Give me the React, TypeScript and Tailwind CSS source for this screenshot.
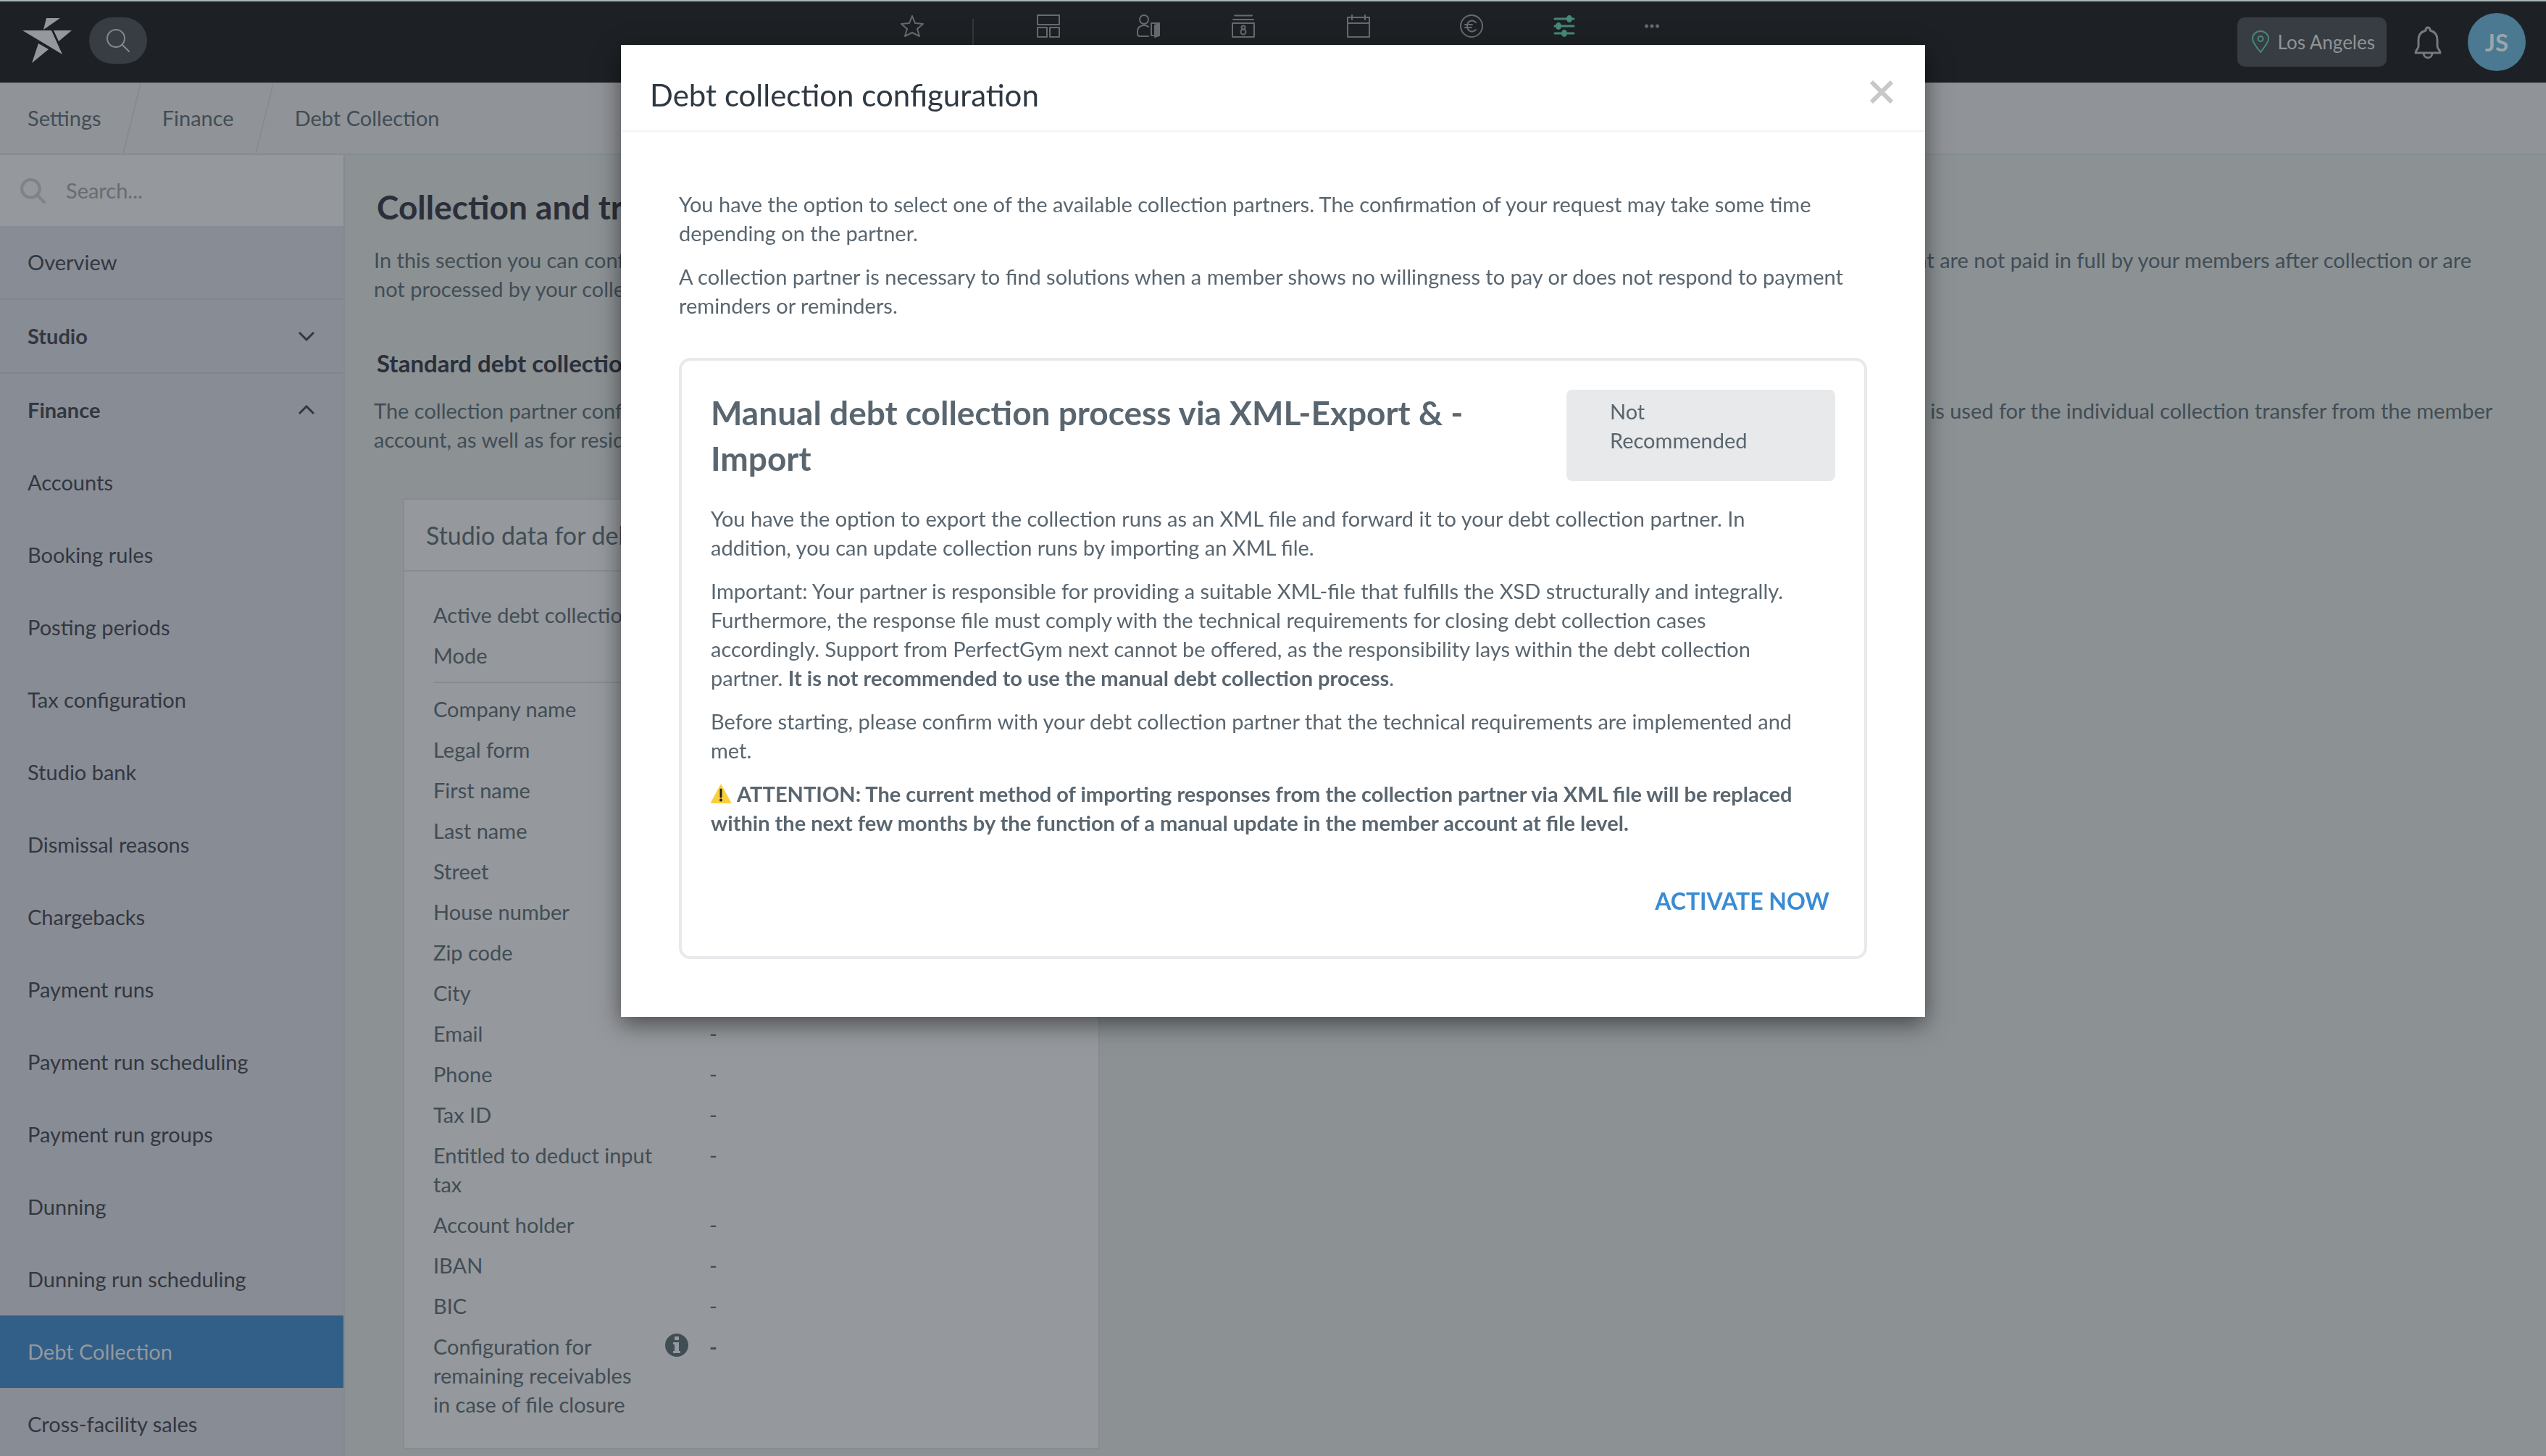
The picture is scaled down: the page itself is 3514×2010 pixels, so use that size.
import { useState, type ReactNode } from 'react';

type Section = {
  title: string;
  open: boolean;
  items: string[];
};

type Field = {
  label: string;
  value: string;
  info?: boolean;
};

const sections: Section[] = [
  { title: 'Studio', open: false, items: [] },
  {
    title: 'Finance',
    open: true,
    items: [
      'Accounts',
      'Booking rules',
      'Posting periods',
      'Tax configuration',
      'Studio bank',
      'Dismissal reasons',
      'Chargebacks',
      'Payment runs',
      'Payment run scheduling',
      'Payment run groups',
      'Dunning',
      'Dunning run scheduling',
      'Debt Collection',
      'Cross-facility sales',
    ],
  },
];

const partnerFields: Field[] = [
  { label: 'Active debt collection', value: '-' },
  { label: 'Mode', value: '-' },
];

const studioFields: Field[] = [
  { label: 'Company name', value: '-' },
  { label: 'Legal form', value: '-' },
  { label: 'First name', value: '-' },
  { label: 'Last name', value: '-' },
  { label: 'Street', value: '-' },
  { label: 'House number', value: '-' },
  { label: 'Zip code', value: '-' },
  { label: 'City', value: '-' },
  { label: 'Email', value: '-' },
  { label: 'Phone', value: '-' },
  { label: 'Tax ID', value: '-' },
  { label: 'Entitled to deduct input tax', value: '-' },
  { label: 'Account holder', value: '-' },
  { label: 'IBAN', value: '-' },
  { label: 'BIC', value: '-' },
  { label: 'Configuration for remaining receivables in case of file closure', value: '-', info: true },
];

function LogoIcon() {
  return (
    <svg width="68" height="64" viewBox="0 0 68 64" fill="#95989c" aria-hidden="true">
      <path d="M33 1h19L29 17z" />
      <path d="M0 18h40l15 33z" />
      <path d="M43 18h25L50 33z" />
      <path d="M22 36l14 8-23 19z" />
    </svg>
  );
}

function SearchIcon({ size, stroke }: { size: number; stroke: number }) {
  return (
    <svg width={size} height={size} viewBox="0 0 34 34" fill="none" stroke="currentColor" strokeWidth={stroke} strokeLinecap="round" aria-hidden="true">
      <circle cx="14" cy="14" r="12" />
      <path d="M23 23l9 9" />
    </svg>
  );
}

function NavButton({ label, className, children }: { label: string; className: string; children: ReactNode }) {
  return (
    <button type="button" aria-label={label} className={`flex justify-center text-[#686b6e] ${className}`}>
      <svg width="32" height="32" viewBox="0 0 32 32" fill="none" stroke="currentColor" strokeWidth="2" strokeLinejoin="round" strokeLinecap="round" aria-hidden="true">
        {children}
      </svg>
    </button>
  );
}

function TopBar() {
  return (
    <header className="grid h-[114px] shrink-0 grid-cols-[1fr_auto_1fr] border-t-2 border-[#a9b7b7] bg-[#1d2125]">
      <div className="flex items-start gap-6 pt-[22px] pl-[31px]">
        <a href="#home" aria-label="Home">
          <LogoIcon />
        </a>
        <button type="button" aria-label="Search" className="flex h-16 w-20 items-center justify-center rounded-full bg-[#373d42] text-[#85888b]">
          <SearchIcon size={34} stroke={2} />
        </button>
      </div>

      <nav className="flex items-start pt-[18px] pl-7" aria-label="Main">
        <NavButton label="Favourites" className="w-[84px]">
          <path d="M16 2l4 10 11 1-8 7 3 10-10-5-10 5 3-10-8-7 11-1z" />
        </NavButton>
        <div className="flex w-[84px] justify-center pt-1.5">
          <span className="h-12 w-0.5 bg-[#34383d]" />
        </div>
        <NavButton label="Dashboard" className="w-[124px]">
          <path d="M1 1h30v13H1zM1 18h13v13H1zM18 18h13v13H18z" />
        </NavButton>
        <NavButton label="Members" className="w-[152px]">
          <circle cx="10" cy="7" r="6" />
          <path d="M16 30H4c-2 0-3-1-3-3v-4c0-5 4-8 9-8 2 0 4 0 6 2" />
          <path d="M23 29h-3V12h11v17h-3" />
          <path d="M25 15l6-3v17l-6 2z" fill="currentColor" />
        </NavButton>
        <NavButton label="Offers" className="w-[110px]">
          <path d="M4 1.5h24M2 7h28M1 12h30v19H1z" />
          <circle cx="16" cy="18" r="2.5" />
          <circle cx="16" cy="24" r="3.5" />
        </NavButton>
        <NavButton label="Calendar" className="w-[208px]">
          <path d="M1 4h30v27H1zM1 12h30M7 1v6M25 1v6" />
        </NavButton>
        <NavButton label="Finance" className="w-[104px]">
          <circle cx="16" cy="16" r="15" />
          <path d="M22 11c-5-5-12-2-12 5s7 10 12 5M7 14h10M7 18h9" />
        </NavButton>
        <NavButton label="Settings" className="w-[152px] text-[#478877]!">
          <path d="M3 6h26M3 16h26M3 26h26" strokeWidth="3" />
          <g fill="currentColor" stroke="none">
            <ellipse cx="23" cy="6" rx="4" ry="5" />
            <ellipse cx="8" cy="16" rx="4" ry="5" />
            <ellipse cx="16" cy="26" rx="4" ry="5" />
          </g>
        </NavButton>
        <NavButton label="More" className="w-[90px]">
          <g fill="currentColor" stroke="none">
            <circle cx="8.5" cy="16" r="2.5" />
            <circle cx="16" cy="16" r="2.5" />
            <circle cx="23.5" cy="16" r="2.5" />
          </g>
        </NavButton>
      </nav>

      <div className="flex items-start justify-end pt-4 pr-7">
        <button type="button" className="mt-1.5 mr-[38px] flex h-[68px] items-center gap-3 rounded-[10px] bg-[#373d42] pr-4 pl-5 text-[26px] text-[#909396]">
          <svg width="24" height="32" viewBox="0 0 24 32" fill="none" stroke="#478877" strokeWidth="2" aria-hidden="true">
            <path d="M12 30C6 22 1 17 1 11.5a11 10.5 0 0 1 22 0C23 17 18 22 12 30z" />
            <circle cx="12" cy="11.5" r="3.5" />
          </svg>
          Los Angeles
        </button>
        <button type="button" aria-label="Notifications" className="mt-[18px] mr-9 text-[#77797c]">
          <svg width="38" height="46" viewBox="0 0 38 46" fill="none" stroke="currentColor" strokeWidth="3" strokeLinejoin="round" aria-hidden="true">
            <path d="M19 2c-3 0-3 3-3 4C9 8 6 13 6 19v9c0 3-4 5-4 9h34c0-4-4-6-4-9v-9c0-6-3-11-10-13 0-1 0-4-3-4z" />
            <path d="M13 37c0 9 12 9 12 0" />
          </svg>
        </button>
        <button type="button" className="h-20 w-20 rounded-full bg-[#4a7991] text-[33px] font-bold text-[#9ca5ab]">
          JS
        </button>
      </div>
    </header>
  );
}

function Slash() {
  return (
    <svg width="26" height="98" viewBox="0 0 26 98" stroke="#858d90" strokeWidth="2" aria-hidden="true">
      <path d="M25 2L1 98" />
    </svg>
  );
}

function Breadcrumbs() {
  return (
    <nav aria-label="Breadcrumb" className="flex h-[100px] shrink-0 items-center gap-[29px] border-b-2 border-[#848c8f] bg-[#909397] pl-[38px] text-[#414d55]">
      <a href="#settings">Settings</a>
      <Slash />
      <a href="#finance">Finance</a>
      <Slash />
      <a href="#debt-collection">Debt Collection</a>
    </nav>
  );
}

function Sidebar({ active, onSelect }: { active: string; onSelect: (item: string) => void }) {
  return (
    <aside className="w-[476px] shrink-0 overflow-hidden border-r-2 border-[#858b91] bg-[#888c95] text-[#33373f]">
      <label className="flex h-[98px] items-center gap-7 bg-[#95989c] pl-7 text-[#808386]">
        <SearchIcon size={35} stroke={4} />
        <input
          type="search"
          aria-label="Search settings"
          placeholder="Search..."
          className="w-80 bg-transparent outline-none placeholder:text-[#696c70]"
        />
      </label>
      <a href="#overview" className="flex h-[100px] items-center px-[38px]">
        Overview
      </a>
      {sections.map((section) => (
        <div key={section.title}>
          <button type="button" aria-expanded={section.open} className="flex h-[102px] w-full items-center justify-between border-t-2 border-[#7f848b] pr-10 pl-[38px] font-bold">
            {section.title}
            <svg width="22" height="14" viewBox="0 0 22 14" fill="none" stroke="currentColor" strokeWidth="3" aria-hidden="true">
              <path d={section.open ? 'M1 12l10-10 10 10' : 'M1 2l10 10 10-10'} />
            </svg>
          </button>
          {section.items.map((item) => (
            <a
              key={item}
              href="#settings"
              onClick={() => onSelect(item)}
              className={`flex h-[100px] items-center px-[38px] ${item === active ? 'bg-[#315f88] text-[#95989c]' : ''}`}
            >
              {item}
            </a>
          ))}
        </div>
      ))}
    </aside>
  );
}

function FieldRow({ label, value, info }: Field) {
  return (
    <div className="flex py-2">
      <dt className="flex w-[381px] shrink-0">
        <span className={info ? 'w-[290px]' : 'w-[320px]'}>{label}</span>
        {info && (
          <svg width="32" height="32" viewBox="0 0 32 32" className="ml-[30px] mt-0.5 shrink-0" role="img" aria-label="More information">
            <circle cx="16" cy="16" r="16" fill="#414d55" />
            <path d="M13 4h6v5h-6zM11 12h8v12h2v3H11v-3h2v-9h-2z" fill="#95989c" />
          </svg>
        )}
      </dt>
      <dd className={info ? 'font-bold' : ''}>{value}</dd>
    </div>
  );
}

function StudioCard() {
  return (
    <section className="mt-[61px] ml-10 w-[962px] border-2 border-[#868d91] bg-[#95989c]">
      <h3 className="flex h-[99px] items-center border-b-2 border-[#868d91] px-[30px] text-[34px]">
        Studio data for debt collection
      </h3>
      <div className="px-10 py-8">
        <dl>
          {partnerFields.map((field) => (
            <FieldRow key={field.label} {...field} />
          ))}
        </dl>
        <hr className="my-2 border-t-2 border-[#868b8f]" />
        <dl>
          {studioFields.map((field) => (
            <FieldRow key={field.label} {...field} />
          ))}
        </dl>
      </div>
    </section>
  );
}

function ConfigurationDialog({ onClose }: { onClose: () => void }) {
  return (
    <div className="fixed inset-0 flex items-start justify-center pt-[62px]">
      <div role="dialog" aria-modal="true" aria-labelledby="dialog-title" className="w-[1800px] bg-white text-[#5a666f] shadow-[0_10px_30px_rgba(0,0,0,0.5)]">
        <div className="flex h-[120px] items-center justify-between border-b-2 border-[#f2f3f4] px-10">
          <h2 id="dialog-title" className="mt-5 text-[42px] text-[#2e3842]">
            Debt collection configuration
          </h2>
          <button type="button" aria-label="Close" onClick={onClose} className="mt-3 mr-1 text-[#c8c8c8]">
            <svg width="32" height="32" viewBox="0 0 32 32" fill="none" stroke="currentColor" strokeWidth="6" aria-hidden="true">
              <path d="M2 2l28 28M30 2L2 30" />
            </svg>
          </button>
        </div>

        <div className="p-20">
          <div className="flex flex-col gap-5">
            <p>
              You have the option to select one of the available collection partners. The confirmation of your request may take some time depending on the partner.
            </p>
            <p>
              A collection partner is necessary to find solutions when a member shows no willingness to pay or does not respond to payment reminders or reminders.
            </p>
          </div>

          <article className="mt-[52px] rounded-2xl border-4 border-[#e8e9eb] p-10">
            <div className="flex justify-between">
              <h3 className="w-[1100px] text-[46px] leading-[63px] font-bold">
                Manual debt collection process via XML-Export & -Import
              </h3>
              <div className="w-[371px] rounded-lg bg-[#e8e9eb] py-2.5 pr-20 pl-[60px]">Not Recommended</div>
            </div>
            <div className="mt-8 flex flex-col gap-5 pr-10">
              <p>
                You have the option to export the collection runs as an XML file and forward it to your debt collection partner. In addition, you can update collection runs by importing an XML file.
              </p>
              <p>
                Important: Your partner is responsible for providing a suitable XML-file that fulfills the XSD structurally and integrally. Furthermore, the response file must comply with the technical requirements for closing debt collection cases accordingly. Support from PerfectGym next cannot be offered, as the responsibility lays within the debt collection partner. <b>It is not recommended to use the manual debt collection process</b>.
              </p>
              <p>
                Before starting, please confirm with your debt collection partner that the technical requirements are implemented and met.
              </p>
              <p className="font-bold">
                <svg width="28" height="26" viewBox="0 0 28 26" className="mr-2 inline-block align-[-2px]" role="img" aria-label="Warning">
                  <path d="M14 1L27 25H1z" fill="#fbcf3b" stroke="#fbcf3b" strokeWidth="2" strokeLinejoin="round" />
                  <path d="M14 7v10" stroke="#1f1f1f" strokeWidth="3" strokeLinecap="round" />
                  <circle cx="14" cy="21.5" r="2" fill="#1f1f1f" />
                </svg>
                ATTENTION: The current method of importing responses from the collection partner via XML file will be replaced within the next few months by the function of a manual update in the member account at file level.
              </p>
            </div>
            <div className="mt-16 flex justify-end pr-2 pb-3">
              <button type="button" className="h-12 text-[32px] font-bold text-[#3a8bd3]">
                ACTIVATE NOW
              </button>
            </div>
          </article>
        </div>
      </div>
    </div>
  );
}

export default function App() {
  const [active, setActive] = useState('Debt Collection');
  const [dialogOpen, setDialogOpen] = useState(true);

  return (
    <div className="flex h-screen flex-col overflow-hidden bg-[#8c9194] font-['Lato',sans-serif] text-[29px] leading-[40px] text-[#414d55]">
      <TopBar />
      <Breadcrumbs />
      <div className="flex min-h-0 flex-1">
        <Sidebar active={active} onSelect={setActive} />
        <main className="min-w-0 flex-1 overflow-hidden pt-10 pr-[72px] pl-10">
          <h1 className="px-1 text-[46px] leading-[63px] font-bold text-[#2b2f3a]">
            Collection and transfer
          </h1>
          <p className="mt-[22px]">
            In this section you can configure the collection and the transfer of open claims. The transfer to a debt collection partner is always carried out for all of the open claims that are not paid in full by your members after collection or are not processed by your collection partner.
          </p>
          <h2 className="mt-[60px] px-1 text-[33px] leading-[44px] font-bold text-[#2b2f3a]">
            Standard debt collection partner
          </h2>
          <p className="mt-6">
            The collection partner configured here is the standard partner of your studio. All your debt collection cases are transferred to this one by default, and it is the partner that is used for the individual collection transfer from the member account, as well as for residual debt claims.
          </p>
          <StudioCard />
        </main>
      </div>
      {dialogOpen && <ConfigurationDialog onClose={() => setDialogOpen(false)} />}
    </div>
  );
}
